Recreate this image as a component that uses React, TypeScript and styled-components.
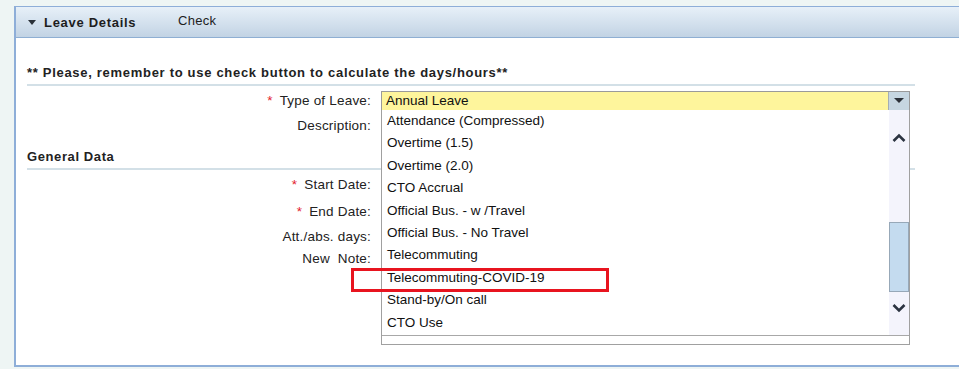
import React from "react";
import styled, {createGlobalStyle} from "styled-components";

const leaveTypes = [
    "Attendance (Compressed)",
    "Overtime (1.5)",
    "Overtime (2.0)",
    "CTO Accrual",
    "Official Bus. - w /Travel",
    "Official Bus. - No Travel",
    "Telecommuting",
    "Telecommuting-COVID-19",
    "Stand-by/On call",
    "CTO Use",
];

const highlighted = "Telecommuting-COVID-19";

const FormRow = ({label, required, shift = 0, children}: {label: string; required?: boolean; shift?: number; children?: React.ReactNode}) => (
    <Row $shift={shift}>
        <Label>
            {required && <Star>*</Star>}
            {label}
        </Label>
        <Value>{children}</Value>
    </Row>
);

export default function App() {
    return (
        <Page>
            <GlobalStyle />
            <Panel>
                <Header>
                    <Toggle>
                        <Caret />
                        Leave Details
                    </Toggle>
                    <HeaderAction>Check</HeaderAction>
                </Header>
                <Body>
                    <Notice>** Please, remember to use check button to calculate the days/hours**</Notice>
                    <Divider />
                    <FormRow label="Type of Leave:" required>
                        <Combo>
                            <ComboText>Annual Leave</ComboText>
                            <ComboButton><ComboArrow /></ComboButton>
                            <Listbox>
                                <Options>
                                    {leaveTypes.map(t => (
                                        <Option key={t}>
                                            {t}
                                            {t === highlighted && <Highlight />}
                                        </Option>
                                    ))}
                                </Options>
                                <Scrollbar>
                                    <ScrollArrow>
                                        <svg width="14" height="10" viewBox="0 0 14 10">
                                            <polyline points="1.5,8 7,2.5 12.5,8" fill="none" stroke="#2b3340" strokeWidth="2.6" />
                                        </svg>
                                    </ScrollArrow>
                                    <Track>
                                        <Thumb />
                                    </Track>
                                    <ScrollArrow>
                                        <svg width="14" height="10" viewBox="0 0 14 10">
                                            <polyline points="1.5,2 7,7.5 12.5,2" fill="none" stroke="#2b3340" strokeWidth="2.6" />
                                        </svg>
                                    </ScrollArrow>
                                </Scrollbar>
                                <HScroll />
                            </Listbox>
                        </Combo>
                    </FormRow>
                    <FormRow label="Description:" />
                    <SectionTitle>General Data</SectionTitle>
                    <Divider />
                    <FormRow label="Start Date:" required shift={2} />
                    <FormRow label="End Date:" required shift={2} />
                    <FormRow label="Att./abs. days:" />
                    <FormRow label="New  Note:" shift={-3} />
                </Body>
            </Panel>
        </Page>
    );
}

const GlobalStyle = createGlobalStyle`
  body {
    margin: 0;
    background: #eef5f4;
    font-family: "Liberation Sans", Arial, sans-serif;
  }
`;

const Page = styled.div`
  width: 959px;
  height: 369px;
  overflow: hidden;
  padding: 6px 0 0 14px;
  box-sizing: border-box;
`;

const Panel = styled.div`
  width: 960px;
  height: 361px;
  box-sizing: border-box;
  background: #fff;
  border: 2px solid #8eaed8;
  border-top-width: 1px;
  border-right: none;
  display: flex;
  flex-direction: column;
`;

const Header = styled.div`
  height: 30px;
  flex: none;
  display: flex;
  align-items: center;
  background: linear-gradient(#e7f0f8, #c2d3e4);
  border-bottom: 1px solid #8fafd3;
  font-size: 13px;
  color: #1d1d1d;
`;

const Toggle = styled.div`
  display: flex;
  align-items: center;
  font-weight: bold;
  letter-spacing: 0.7px;
  padding-left: 12px;
  width: 150px;
`;

const Caret = styled.span`
  width: 0;
  height: 0;
  border-left: 4px solid transparent;
  border-right: 4px solid transparent;
  border-top: 5px solid #2a3038;
  margin-right: 8px;
`;

const HeaderAction = styled.div`
  margin-top: -3px;
  letter-spacing: 0.3px;
`;

const Body = styled.div`
  padding-left: 11px;
  font-size: 13.5px;
  color: #222;
`;

const Notice = styled.div`
  margin-top: 27px;
  line-height: 16px;
  font-weight: bold;
  font-size: 13px;
  letter-spacing: 0.7px;
`;

const Divider = styled.div`
  width: 888px;
  height: 2px;
  background: #d3e0e7;
  margin-top: 3px;
  margin-bottom: 2px;
`;

const SectionTitle = styled.div`
  margin-top: 11px;
  line-height: 16px;
  font-weight: bold;
  font-size: 13px;
  letter-spacing: 0.6px;
`;

const Row = styled.div<{$shift: number}>`
  display: grid;
  grid-template-columns: 344px 1fr;
  column-gap: 10px;
  height: 25px;
  margin-top: ${p => p.$shift}px;
  align-items: center;
`;

const Label = styled.div`
  text-align: right;
  white-space: pre;
  letter-spacing: 0.2px;
`;

const Star = styled.span`
  color: #e3202c;
  margin-right: 7px;
`;

const Value = styled.div`
  display: flex;
  align-items: center;
`;

const Combo = styled.div`
  position: relative;
  width: 529px;
  height: 20px;
  box-sizing: border-box;
  border: 1px solid #9a9a9a;
  background: #fef59c;
  display: flex;
  align-items: center;
`;

const ComboText = styled.div`
  flex: 1;
  padding-left: 4px;
  color: #111;
`;

const ComboButton = styled.div`
  width: 20px;
  height: 100%;
  background: #c6d6e1;
  border-left: 1px solid #a3adb5;
  display: flex;
  align-items: center;
  justify-content: center;
`;

const ComboArrow = styled.span`
  width: 0;
  height: 0;
  border-left: 5px solid transparent;
  border-right: 5px solid transparent;
  border-top: 5px solid #2b3038;
`;

const Listbox = styled.div`
  position: absolute;
  top: 100%;
  left: -1px;
  width: 529px;
  height: 235px;
  box-sizing: border-box;
  background: #fff;
  border: 1px solid #a0a0a0;
  border-top: none;
  z-index: 2;
`;

const Options = styled.div`
  padding-top: 0.5px;
`;

const Option = styled.div`
  position: relative;
  height: 22.4px;
  line-height: 22.4px;
  padding-left: 5px;
  color: #111;
  white-space: nowrap;
`;

const Highlight = styled.div`
  position: absolute;
  left: -31px;
  top: 1px;
  width: 258px;
  height: 24px;
  box-sizing: border-box;
  border: 3px solid #e8141f;
`;

const Scrollbar = styled.div`
  position: absolute;
  right: 0;
  top: 0;
  bottom: 8px;
  width: 20px;
  background: #f4f4fc;
  display: flex;
  flex-direction: column;
`;

const ScrollArrow = styled.div`
  height: 20px;
  margin: 18px 0;
  display: flex;
  align-items: center;
  justify-content: center;
`;

const Track = styled.div`
  flex: 1;
  position: relative;
`;

const Thumb = styled.div`
  position: absolute;
  left: 0;
  right: 0;
  top: 56px;
  height: 70px;
  box-sizing: border-box;
  background: #c4dbef;
  border: 1px solid #97a8b8;
`;

const HScroll = styled.div`
  position: absolute;
  left: 0;
  right: 0;
  bottom: 0;
  height: 8px;
  border-top: 1px solid #a8a8a8;
`;
